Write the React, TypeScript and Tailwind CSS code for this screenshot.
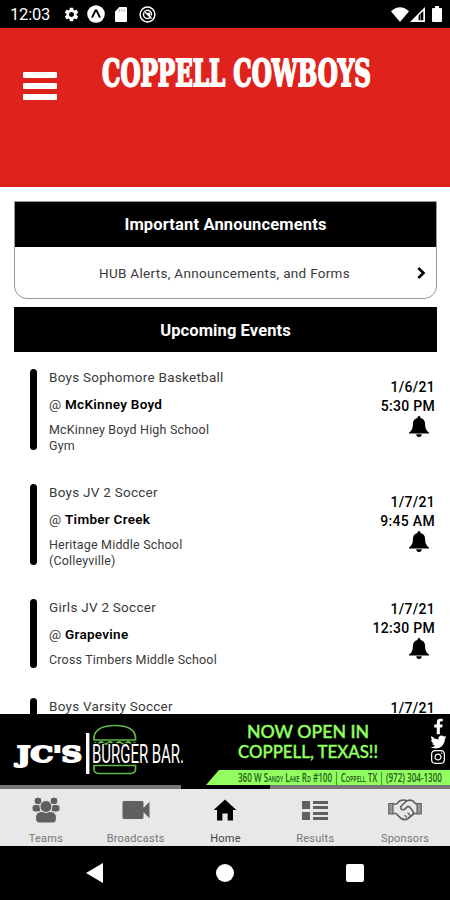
import React from "react";
import { MdSettings, MdVideocam } from "react-icons/md";
import { IoMdHome } from "react-icons/io";
import { FaFacebookF, FaTwitter, FaInstagram } from "react-icons/fa";

type EventItem = {
  id: number;
  title: string;
  opponent: string;
  location: string[];
  date: string;
  time: string;
};

const events: EventItem[] = [
  {
    id: 1,
    title: "Boys Sophomore Basketball",
    opponent: "McKinney Boyd",
    location: ["McKinney Boyd High School", "Gym"],
    date: "1/6/21",
    time: "5:30 PM",
  },
  {
    id: 2,
    title: "Boys JV 2 Soccer",
    opponent: "Timber Creek",
    location: ["Heritage Middle School", "(Colleyville)"],
    date: "1/7/21",
    time: "9:45 AM",
  },
  {
    id: 3,
    title: "Girls JV 2 Soccer",
    opponent: "Grapevine",
    location: ["Cross Timbers Middle School"],
    date: "1/7/21",
    time: "12:30 PM",
  },
];

function StatusBar() {
  return (
    <div className="flex h-7 shrink-0 items-center bg-black pl-[10px] pr-[8px] text-white">
      <span className="w-[53px] pt-[3px] text-[16.5px] tracking-[-0.2px]">12:03</span>
      <MdSettings className="h-[17px] w-[17px]" />
      <svg viewBox="0 0 18 18" className="ml-[7px] h-[18px] w-[18px]">
        <circle cx="9" cy="9" r="8.8" fill="#fff" />
        <path d="M5 12.6 8.3 5.8q.7-1 1.4 0L13 12.6" fill="none" stroke="#000" strokeWidth="1.9" />
      </svg>
      <svg viewBox="0 0 12 15" className="ml-[10px] h-[15px] w-[12px]">
        <path d="M4.4 0H11q1 0 1 1v13q0 1-1 1H1q-1 0-1-1V4.6z" fill="#fff" />
        <path d="M4.3 2.6v2M6.8 2.2v2.4M9.3 2.2v2.4" stroke="#888" strokeWidth=".8" />
      </svg>
      <svg viewBox="0 0 17 17" className="ml-[12px] h-[17px] w-[17px]" fill="none" stroke="#fff">
        <circle cx="8.5" cy="8.5" r="7.4" strokeWidth="1.5" />
        <path d="M5 6.500a4 4 0 1 0 7 4M6.500 4.900a4 4 0 0 1 5.800 4.600" strokeWidth="1.4" />
        <path d="M5 5l7.500 7.500M8 7.500h2.500v2.500" strokeWidth="1.3" />
      </svg>
      <svg viewBox="0 0 18 15" className="ml-auto h-[15px] w-[18px]">
        <path d="M0 4.2Q9-3.8 18 4.2L9 15z" fill="#fff" />
      </svg>
      <svg viewBox="0 0 15 15" className="ml-px h-[15px] w-[15px]">
        <path d="M15 0v15H0z" fill="#fff" />
        <path d="M8.6 8.5 13.3 4v9.3H8.6z" fill="#000" />
        <path d="M10.5 7.5v5.8" stroke="#999" strokeWidth=".8" />
      </svg>
      <svg viewBox="0 0 10 16" className="ml-[7px] h-[16px] w-[10px]">
        <path d="M3 0h4v2h2q1 0 1 1v12q0 1-1 1H1q-1 0-1-1V3q0-1 1-1h2z" fill="#fff" />
      </svg>
    </div>
  );
}

function Header() {
  return (
    <header className="flex h-[159px] shrink-0 items-start bg-[#df231c]">
      <button className="ml-[23px] mt-[44px] flex w-[34px] flex-col gap-[5px]" aria-label="Menu">
        <span className="h-[6px] w-full rounded-[1px] bg-white" />
        <span className="h-[6px] w-full rounded-[1px] bg-white" />
        <span className="h-[6px] w-full rounded-[1px] bg-white" />
      </button>
      <svg viewBox="0 0 280 60" className="ml-[40px] mt-[14px] h-[60px] w-[280px]">
        <text
          x="5"
          y="43.500"
          fontFamily="DejaVu Serif"
          fontWeight="700"
          fontSize="37"
          textLength="269"
          lengthAdjust="spacingAndGlyphs"
          fill="#fff"
          stroke="#fff"
          strokeWidth="2"
        >
          COPPELL COWBOYS
        </text>
      </svg>
    </header>
  );
}

function BellIcon() {
  return (
    <svg viewBox="0 0 20 21" className="mr-[6px] h-[21px] w-[20px]" fill="#000">
      <path d="M8.500 1.500a1.500 1.500 0 0 1 3 0v.6q4.600 1.100 4.600 6.100 0 6.200 3.900 8.300v1H0v-1q3.900-2.100 3.900-8.300 0-5 4.600-6.100z" />
      <path d="M7.300 18.300h5.400a2.700 2.600 0 0 1-5.400 0z" />
    </svg>
  );
}

function EventRow({ event }: { event: EventItem }) {
  const short = event.location.length === 1;
  return (
    <div className={short ? "flex h-[69px]" : "flex h-[81px]"}>
      <div className="w-[7px] shrink-0 rounded-full bg-black" />
      <div className="ml-[12px] min-w-0 flex-1 text-[#3a3a3a]">
        <p className="h-[16px] text-[13.5px] leading-[16px] tracking-[0.26px]">{event.title}</p>
        <p className="mt-[11px] h-[16px] text-[13.5px] leading-[16px] tracking-[0.28px]">
          @ <span className="font-semibold text-black">{event.opponent}</span>
        </p>
        <div className="mt-[10px] text-[12.5px] leading-[15.5px] tracking-[0.18px]">
          {event.location.map((line) => (
            <p key={line} className="h-[15.5px]">{line}</p>
          ))}
        </div>
      </div>
      <div
        className={`mr-[2px] flex flex-col items-end text-[14px] font-medium leading-[19px] tracking-[0.3px] text-black ${
          short ? "pt-px" : "pt-[9px]"
        }`}
      >
        <span>{event.date}</span>
        <span>{event.time}</span>
        <BellIcon />
      </div>
    </div>
  );
}

function AdBanner() {
  return (
    <div className="flex h-[71px] shrink-0 bg-black">
      <svg viewBox="0 0 450 71" className="h-[71px] w-[450px]">
        <text x="17" y="48" fontFamily="DejaVu Serif" fontWeight="700" fontSize="22.500" textLength="65" lengthAdjust="spacingAndGlyphs" fill="#fff" stroke="#fff" strokeWidth="2">
          JC'S
        </text>
        <rect x="86" y="19" width="3.4" height="41" fill="#fff" />
        <g fill="none" stroke="#60b744" strokeWidth="1.7">
          <path d="M94 26v-3q2-11.500 21-11.500T135.500 23v3z" />
          <path d="M95 28q1.500 3.500 4 1 2.500-2 4.500 0t4.500 0 4.500 0 4.500 0 4.500 0 4.500 0 4.500 0 4.500-1" />
          <path d="M94 51.500h41.500v4q-.5 4-5 4h-31.500q-4.500 0-5-4z" />
        </g>
        <text x="92" y="49" fontFamily="Roboto" fontWeight="400" fontSize="25" textLength="92" lengthAdjust="spacingAndGlyphs" fill="#fff" stroke="#000" strokeWidth="2" paintOrder="stroke">
          BURGER BAR.
        </text>
        <g fontFamily="Lato" fontWeight="500" fontSize="17.500" fill="#92ff61" stroke="#92ff61" strokeWidth=".4">
          <text x="247" y="23.500" textLength="122" lengthAdjust="spacingAndGlyphs">NOW OPEN IN</text>
          <text x="238" y="44" textLength="140" lengthAdjust="spacingAndGlyphs">COPPELL, TEXAS!!</text>
        </g>
        <path d="M206 71 219 56H450V71z" fill="#92ff61" />
        <text
          x="238"
          y="67.500"
          className="[font-variant-caps:small-caps]"
          fontFamily="Open Sans"
          fontWeight="600"
          fontSize="12"
          textLength="204"
          lengthAdjust="spacingAndGlyphs"
          fill="#245c18"
        >
          360 W Sandy Lake Rd #100 | Coppell TX | (972) 304-1300
        </text>
        <FaFacebookF x="430.500" y="4.500" width="13" height="13" color="#fff" />
        <FaTwitter x="430.500" y="20" width="13" height="13" color="#fff" />
        <FaInstagram x="430" y="35" width="14.500" height="14.500" color="#fff" />
      </svg>
    </div>
  );
}

function TeamsIcon() {
  return (
    <svg viewBox="0 0 28 26" className="h-[26px] w-[28px]" fill="currentColor" stroke="#e8e8e8" strokeWidth="1">
      <circle cx="6" cy="4" r="4" />
      <circle cx="22" cy="4" r="4" />
      <rect x="0" y="7.500" width="9" height="7.500" rx="3" />
      <rect x="19" y="7.500" width="9" height="7.500" rx="3" />
      <path d="M8.500 14.500h11q5 1 5 6.500 0 5-4 5h-13q-4 0-4-5 0-5.500 5-6.500z" />
      <circle cx="14" cy="9.500" r="6" />
    </svg>
  );
}

function ResultsIcon() {
  return (
    <svg viewBox="0 0 26 19" className="h-[19px] w-[26px]" fill="currentColor">
      <path d="M0 0h8v8H0zM0 11h8v8H0zM11 0h15v3H11zM11 5h15v3H11zM11 11h15v3H11zM11 16h15v3H11z" />
    </svg>
  );
}

function SponsorsIcon() {
  return (
    <svg viewBox="0 0 34 22" className="h-[22px] w-[34px]" fill="none" stroke="currentColor" strokeWidth="1.7" strokeLinejoin="round" strokeLinecap="round">
      <path d="M.8 4.500H5V15H.8zM29 4.500h4.200V15H29z" fill="currentColor" fillOpacity=".6" strokeWidth="1.2" />
      <path d="M5.500 5h3L12 1.600q5-1.400 6.500.4 3.500-1.500 6-.3L28 5h.8M5.500 14.500H8l5 4.800q3.500 2.600 7 .2l6-5h2.500" />
      <path d="M18.500 2 13.300 7q-1.500 2.500.7 3.600 1.800.6 3.600-1.300l2.200-2q1.500 0 2.400 1.400l2.600 3.300q1.300 1.400.2 2.800" />
      <path d="M17 16.500l1.500 1.500M20 14l2.300 2.500" strokeWidth="1.300" />
    </svg>
  );
}

const tabs = [
  { label: "Teams", icon: <TeamsIcon /> },
  { label: "Broadcasts", icon: <MdVideocam className="h-[36px] w-[36px]" /> },
  { label: "Home", icon: <IoMdHome className="h-[28px] w-[28px]" />, active: true },
  { label: "Results", icon: <ResultsIcon /> },
  { label: "Sponsors", icon: <SponsorsIcon /> },
];

function TabBar() {
  return (
    <>
      <div className="flex h-1 shrink-0 bg-[#777]">
        <div className="ml-[181px] w-[89px] bg-black" />
      </div>
      <nav className="grid h-[57px] shrink-0 grid-cols-5 bg-[#e8e8e8] pl-px">
        {tabs.map((tab) => (
          <div
            key={tab.label}
            className={`flex flex-col items-center ${tab.active ? "text-black" : "text-[#606060]"}`}
          >
            <div className="flex h-[42px] items-center justify-center">{tab.icon}</div>
            <span className={`text-[11px] leading-[15px] tracking-[0.25px] ${tab.active ? "text-[#444]" : "text-[#777]"}`}>
              {tab.label}
            </span>
          </div>
        ))}
      </nav>
    </>
  );
}

export default function App() {
  return (
    <div className="flex h-[900px] w-[450px] flex-col overflow-hidden bg-white font-['Roboto',sans-serif]">
      <StatusBar />
      <Header />

      <main className="flex min-h-0 flex-1 flex-col overflow-hidden pl-[14px] pr-[13px] pt-[14px]">
        {/* Announcements */}
        <section className="shrink-0 rounded-b-[13px] border border-[#999]">
          <h2 className="flex h-[45px] items-center justify-center bg-black pt-[2px] text-[16.5px] font-bold tracking-[0.15px] text-white">
            Important Announcements
          </h2>
          <div className="flex h-[51px] items-center pl-[84px] pr-[10px] pt-px text-[13.5px] tracking-[0.3px] text-[#3a3a3a]">
            <span className="whitespace-nowrap">HUB Alerts, Announcements, and Forms</span>
            <svg viewBox="0 0 9 12" className="ml-auto h-[12px] w-[9px]" fill="none" stroke="#000" strokeWidth="2.600">
              <path d="M1.300 1 6.500 6 1.300 11" />
            </svg>
          </div>
        </section>

        {/* Events */}
        <h2 className="mt-[8px] flex h-[45px] shrink-0 items-center justify-center bg-black pt-[3px] text-[16.5px] font-bold tracking-[0.1px] text-white">
          Upcoming Events
        </h2>
        <div className="flex flex-col pl-[16px] pt-[17px]">
          <div className="flex flex-col gap-[34px]">
            {events.map((event) => (
              <EventRow key={event.id} event={event} />
            ))}
          </div>
          {/* Next row, mostly below the fold */}
          <div className="mt-[30px] flex h-[69px]">
            <div className="w-[7px] shrink-0 rounded-full bg-black" />
            <p className="ml-[12px] flex-1 text-[13.5px] leading-[16px] tracking-[0.26px] text-[#3a3a3a]">Boys Varsity Soccer</p>
            <span className="mr-[2px] pt-px text-[14px] font-medium leading-[19px] tracking-[0.3px] text-black">1/7/21</span>
          </div>
        </div>
      </main>

      <AdBanner />
      <TabBar />

      {/* System navigation */}
      <div className="flex h-[54px] shrink-0 items-center bg-black">
        <svg viewBox="0 0 17 20" className="ml-[86px] h-[20px] w-[17px]">
          <path d="M17 0v20L0 10z" fill="#fff" />
        </svg>
        <div className="ml-[113px] h-[18px] w-[18px] rounded-full bg-white" />
        <div className="ml-[112px] h-[18px] w-[18px] rounded-[2px] bg-white" />
      </div>
    </div>
  );
}
